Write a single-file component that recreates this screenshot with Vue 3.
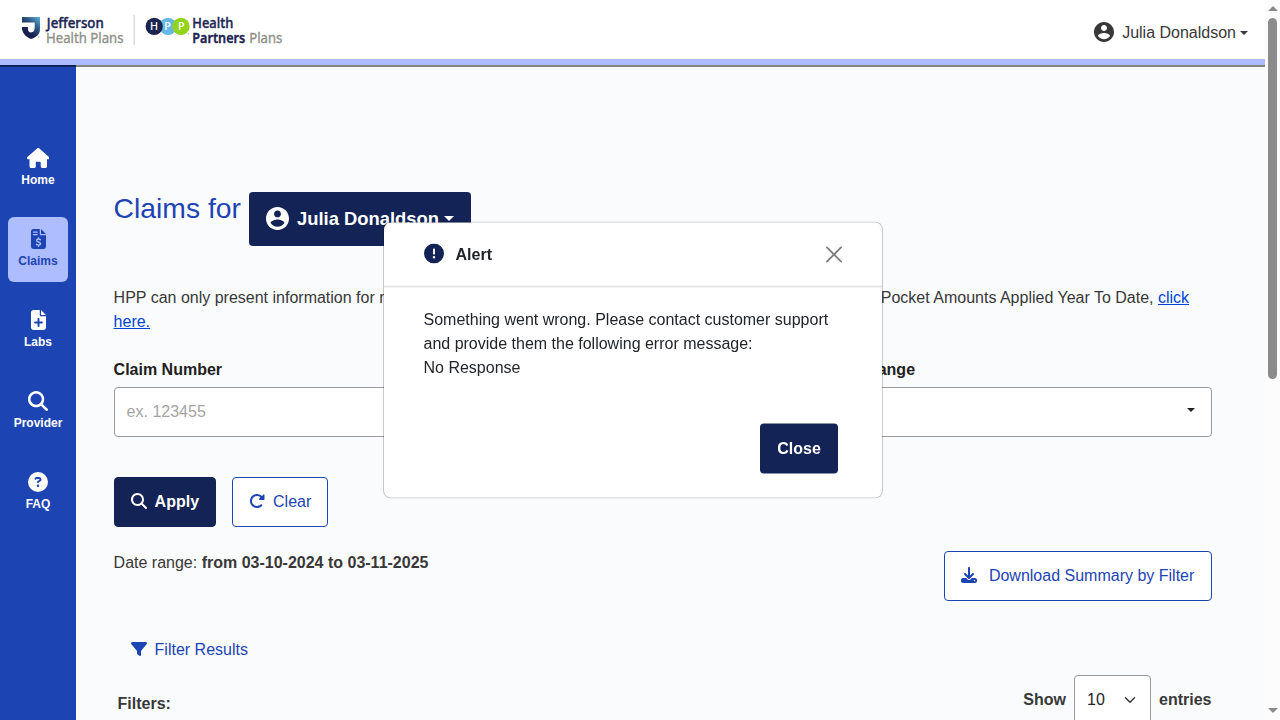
<script setup>
const file = 'M64 0C28.7 0 0 28.7 0 64V448c0 35.3 28.7 64 64 64H320c35.3 0 64-28.7 64-64V160H256c-17.7 0-32-14.3-32-32V0H64zM256 0V128H384L256 0z'
const search = 'M416 208c0 45.9-14.9 88.3-40 122.7L502.6 457.4c12.5 12.5 12.5 32.8 0 45.3s-32.8 12.5-45.3 0L330.7 376c-34.4 25.2-76.8 40-122.7 40C93.1 416 0 322.9 0 208S93.1 0 208 0S416 93.1 416 208zM208 352a144 144 0 1 0 0-288 144 144 0 1 0 0 288z'
const user = 'M12 2C6.48 2 2 6.48 2 12s4.48 10 10 10 10-4.48 10-10S17.52 2 12 2zm0 3c1.66 0 3 1.34 3 3s-1.34 3-3 3-3-1.34-3-3 1.34-3 3-3zm0 14.2c-2.5 0-4.71-1.28-6-3.22.03-1.99 4-3.08 6-3.08 1.99 0 5.97 1.09 6 3.08-1.29 1.94-3.5 3.22-6 3.22z'
const nav = [
  { label: 'Home', w: 576, path: 'M575.8 255.5c0 18-15 32.1-32 32.1h-32l.7 160.2c0 2.7-.2 5.4-.5 8.1V472c0 22.1-17.9 40-40 40H456c-1.1 0-2.2 0-3.3-.1c-1.4 .1-2.8 .1-4.2 .1H416 392c-22.1 0-40-17.9-40-40V448 384c0-17.7-14.3-32-32-32H256c-17.7 0-32 14.3-32 32v64 24c0 22.1-17.9 40-40 40H160 128.1c-1.5 0-3-.1-4.5-.2c-1.2 .1-2.4 .2-3.6 .2H104c-22.1 0-40-17.9-40-40V360c0-.9 0-1.9 .1-2.8V287.6H32c-18 0-32-14-32-32.1c0-9 3-17 10-24L266.4 8c7-7 15-8 22-8s15 2 21 7L564.8 231.5c8 7 12 15 11 24z' },
  { label: 'Claims', w: 384, path: file, active: true, lines: 'M64 80H160M64 144H160', mark: 'M240 274c-14-14-30-18-48-18-28 0-48 12-48 36 0 52 100 28 100 82 0 26-22 38-50 38-22 0-42-6-56-20M192 226V256M192 412V442' },
  { label: 'Labs', w: 384, path: file, cross: 'M192 232V408M104 320H280' },
  { label: 'Provider', w: 512, path: search },
  { label: 'FAQ', w: 512, path: 'M256 512A256 256 0 1 0 256 0a256 256 0 1 0 0 512zM169.8 165.3c7.9-22.3 29.1-37.3 52.8-37.3h58.3c34.9 0 63.1 28.3 63.1 63.1c0 22.6-12.1 43.5-31.7 54.8L280 264.4c-.2 13-10.9 23.6-24 23.6c-13.3 0-24-10.7-24-24V250.5c0-8.6 4.6-16.5 12.1-20.8l44.3-25.4c4.7-2.7 7.6-7.7 7.6-13.1c0-8.4-6.8-15.1-15.1-15.1H222.6c-3.4 0-6.4 2.1-7.5 5.3l-.4 1.2c-4.4 12.5-18.2 19-30.6 14.6s-19-18.2-14.6-30.6l.4-1.2zM224 352a32 32 0 1 1 64 0 32 32 0 1 1 -64 0z' },
]
</script>

<template>
  <div class="window">
    <div class="page">
      <header class="header">
        <svg class="logo" width="270" height="36" viewBox="0 0 270 36">
          <defs>
            <linearGradient id="shield" x1="1" y1="0" x2="0.3" y2="0.9">
              <stop offset="0" stop-color="#62b2df" />
              <stop offset="0.45" stop-color="#2d5682" />
              <stop offset="0.8" stop-color="#18204f" />
            </linearGradient>
          </defs>
          <path fill="url(#shield)" d="M2 3H20V15C20 20 17 23 11 25C6 23 3 20 2 15V13H8V15C8 17.3 9.2 18.4 11 18.4C13.3 18.4 14.7 16.8 14.7 14V8.4H2Z" />
          <circle cx="18.8" cy="23" r=".8" fill="#aaa" />
          <text x="26.8" y="13.5" textLength="57" lengthAdjust="spacingAndGlyphs" class="word navy">Jefferson</text>
          <text x="26" y="29.2" textLength="77.5" lengthAdjust="spacingAndGlyphs" class="word gray">Health Plans</text>
          <path d="M114.2 1V31" stroke="#dcdcdc" stroke-width="1.5" />
          <circle cx="148" cy="12.4" r="8.6" fill="#66b9e6" />
          <circle cx="161" cy="12.4" r="8.6" fill="#92d41d" />
          <circle cx="134.2" cy="12.4" r="8.6" fill="#1d2452" />
          <circle cx="168.3" cy="19.8" r=".8" fill="#bbb" />
          <g class="initial">
            <text x="134" y="16.3">H</text><text x="147.6" y="16.3">P</text><text x="161.2" y="16.3">P</text>
          </g>
          <text x="172.3" y="13.5" textLength="41" lengthAdjust="spacingAndGlyphs" class="word navy">Health</text>
          <text x="172.3" y="29.2" textLength="53" lengthAdjust="spacingAndGlyphs" class="word navy bold">Partners</text>
          <text x="229.3" y="29.2" textLength="33" lengthAdjust="spacingAndGlyphs" class="word gray">Plans</text>
        </svg>
        <div class="account">
          <svg width="20" height="20" viewBox="2 2 20 20"><path :d="user" /></svg>
          <span>Julia Donaldson</span><i class="caret"></i>
        </div>
      </header>

      <div class="body">
        <nav class="side">
          <a v-for="n in nav" :key="n.label" class="item" :class="{ active: n.active }">
            <svg :width="n.w * 20 / 512" height="20" :viewBox="`0 0 ${n.w} 512`">
              <path :d="n.path" />
              <path v-if="n.lines" :d="n.lines" class="cut" stroke-width="30" />
              <path v-if="n.mark" :d="n.mark" class="cut" stroke-width="36" />
              <path v-if="n.cross" :d="n.cross" class="cut" stroke-width="50" />
            </svg>
            <span>{{ n.label }}</span>
          </a>
        </nav>

        <main class="main">
          <div class="title">
            <h1>Claims for</h1>
            <button class="member">
              <svg width="23" height="23" viewBox="2 2 20 20"><path :d="user" /></svg>
              <span>Julia Donaldson</span><i class="caret"></i>
            </button>
          </div>
          <div class="note">
            <div class="note-line">
              <span>HPP can only present information for medical claims.</span>
              <span>Out-of-Pocket Amounts Applied Year To Date, <a>click</a></span>
            </div>
            <a>here.</a>
          </div>
          <div class="fields">
            <label>Claim Number<span class="control placeholder">ex. 123455</span></label>
            <label>Date Range<span class="control end"><i class="caret"></i></span></label>
          </div>
          <div class="actions">
            <button class="btn solid">
              <svg width="16" height="16" viewBox="0 0 512 512"><path :d="search" /></svg>Apply
            </button>
            <button class="btn">
              <svg width="16" height="16" viewBox="0 0 512 512"><path d="M463.5 224H472c13.3 0 24-10.7 24-24V72c0-9.7-5.8-18.5-14.8-22.2s-19.3-1.7-26.2 5.2L413.4 96.6c-87.6-86.5-228.7-86.2-315.8 1c-87.5 87.5-87.5 229.3 0 316.8s229.3 87.5 316.8 0c12.5-12.5 12.5-32.8 0-45.3s-32.8-12.5-45.3 0c-62.5 62.5-163.8 62.5-226.3 0s-62.5-163.8 0-226.3c62.2-62.2 162.7-62.5 225.3-1L327 183c-6.9 6.9-8.9 17.2-5.2 26.2s12.5 14.8 22.2 14.8H463.5z" /></svg>Clear
            </button>
          </div>
          <div class="summary">
            <p>Date range: <b>from 03-10-2024 to 03-11-2025</b></p>
            <button class="btn download">
              <svg width="16" height="16" viewBox="0 0 512 512"><path d="M288 32c0-17.7-14.3-32-32-32s-32 14.3-32 32V274.7l-73.4-73.4c-12.5-12.5-32.8-12.5-45.3 0s-12.5 32.8 0 45.3l128 128c12.5 12.5 32.8 12.5 45.3 0l128-128c12.5-12.5 12.5-32.8 0-45.3s-32.8-12.5-45.3 0L288 274.7V32zM64 352c-35.3 0-64 28.7-64 64v32c0 35.3 28.7 64 64 64H448c35.3 0 64-28.7 64-64V416c0-35.3-28.7-64-64-64H346.5l-45.3 45.3c-25 25-65.5 25-90.5 0L165.5 352H64zm368 56a24 24 0 1 1 0 48 24 24 0 1 1 0-48z" /></svg>Download Summary by Filter
            </button>
          </div>
          <div class="filter">
            <svg width="16" height="16" viewBox="0 0 512 512"><path d="M3.9 54.9C10.5 40.9 24.5 32 40 32H472c15.5 0 29.5 8.9 36.1 22.9s4.6 30.5-5.2 42.5L320 320.9V448c0 12.1-6.8 23.2-17.7 28.6s-23.8 4.3-33.5-3l-64-48c-8.1-6-12.8-15.5-12.8-25.6V320.9L9 97.3C-.7 85.4-2.8 68.8 3.9 54.9z" /></svg>
            Filter Results
          </div>
          <div class="table-head">
            <b class="filters">Filters:</b>
            <div class="entries">
              <b>Show</b>
              <span class="select">10
                <svg width="12" height="12" viewBox="0 0 16 16"><path d="m2 5 6 6 6-6" fill="none" stroke="#343a40" stroke-width="2" stroke-linecap="round" stroke-linejoin="round" /></svg>
              </span>
              <b>entries</b>
            </div>
          </div>
        </main>
      </div>
    </div>

    <div class="scrollbar">
      <i class="up"></i><i class="thumb"></i><i class="down"></i>
    </div>

    <section class="modal">
      <div class="modal-head">
        <svg width="20" height="20" viewBox="0 0 512 512"><path d="M256 512A256 256 0 1 0 256 0a256 256 0 1 0 0 512zm0-384c13.3 0 24 10.7 24 24V264c0 13.3-10.7 24-24 24s-24-10.7-24-24V152c0-13.3 10.7-24 24-24zM224 352a32 32 0 1 1 64 0 32 32 0 1 1 -64 0z" /></svg>
        <b>Alert</b>
        <svg class="x" width="16" height="16" viewBox="0 0 16 16"><path d="M.7.7 15.3 15.3M15.3.7.7 15.3" stroke="#7f7f7f" stroke-width="1.9" stroke-linecap="round" /></svg>
      </div>
      <p>Something went wrong. Please contact customer support<br>and provide them the following error message:<br>No Response</p>
      <button class="close">Close</button>
    </section>
  </div>
</template>

<style>
html, body { overflow: hidden; }
</style>

<style scoped>
* { box-sizing: border-box; }
.window { position: relative; display: flex; width: 1280px; height: 720px; overflow: hidden; font: 16px/24px "Liberation Sans", Arial, sans-serif; color: #383838; background: #fafbfd; }
svg { display: block; flex: none; fill: currentColor; }
button { font-family: inherit; margin: 0; }
p, h1 { margin: 0; }
.page { width: 1265px; height: 720px; display: flex; flex-direction: column; overflow: hidden; }
.header { height: 65px; flex: none; display: flex; justify-content: space-between; align-items: flex-start; background: #fff; border-bottom: 6px solid #adbdff; padding: 14px 17px 0 20px; box-shadow: 0 2px 0 rgba(0,0,0,.47); position: relative; }
.logo { overflow: visible; }
.word { font-family: "Noto Sans", sans-serif; font-size: 14.8px; }
.navy { fill: #1d2452; font-weight: 500; stroke: #1d2452; stroke-width: .4px; }
.bold { font-weight: 600; }
.gray { fill: #8e8f86; font-weight: 400; stroke: #8e8f86; stroke-width: .35px; }
.initial { font: 500 10.8px "Noto Sans", sans-serif; fill: #fff; text-anchor: middle; }
.account { display: flex; align-items: center; margin-top: 6px; }
.account svg { margin-top: -1px; }
.account span { margin-left: 8px; padding-top: 1px; }
.caret { display: inline-block; border: 4.8px solid transparent; border-top-color: currentColor; border-bottom: 0; margin-left: 4px; }
.body { flex: 1; display: flex; min-height: 0; }
.side { width: 76px; flex: none; background: #1d44b3; padding: 71px 8px 0; display: flex; flex-direction: column; gap: 16px; }
.item { height: 65px; border-radius: 6px; display: flex; flex-direction: column; align-items: center; padding-top: 12px; color: #fff; font-weight: 700; font-size: 12px; line-height: 18px; gap: 3px; }
.active { background: #adbdff; color: #1d44b3; }
.cut { fill: none; stroke: #1d44b3; stroke-linecap: round; }
.active .cut { stroke: #adbdff; }
.main { width: 1136px; padding: 127px 0 0 37.6px; }
.title { display: flex; height: 54px; }
h1 { font-size: 28.3px; line-height: 32px; font-weight: 400; color: #1d44b3; width: 135.4px; white-space: nowrap; }
.member { width: 222px; height: 54px; border: 0; border-radius: 4px; background: #142355; color: #fff; font-weight: 700; font-size: 18.4px; display: flex; align-items: center; padding: 0 17px; }
.member svg { margin-top: -1px; }
.member span { margin-left: 8px; white-space: nowrap; }
.member .caret { border-width: 5.5px 5.5px 0; margin: -2px 0 0 5px; }
.note { margin-top: 40px; }
.note-line { display: flex; justify-content: space-between; width: 1075.5px; white-space: nowrap; }
.note a { color: #0044d6; text-decoration: underline; }
.fields { display: grid; grid-template-columns: 1fr 385px; gap: 24px; margin-top: 24px; }
.fields label { display: block; font-weight: 700; color: #212121; }
.control { display: flex; align-items: center; height: 50px; margin-top: 5px; background: #fff; border: 1px solid #9b9b9b; border-radius: 4px; padding: 0 12px; font-weight: 400; }
.placeholder { color: #a5a5a5; }
.end { justify-content: flex-end; padding: 0 16px 5px; }
.actions { display: flex; gap: 16px; margin-top: 40px; }
.btn { height: 50px; border: 1px solid #1d44b3; border-radius: 4px; background: #fff; color: #1d44b3; font-size: 16px; line-height: 24px; padding: 0 16px; display: flex; align-items: center; gap: 8px; white-space: nowrap; }
.btn svg { margin-top: -2px; }
.solid { background: #142355; border-color: #142355; color: #fff; font-weight: 700; }
.download { gap: 12px; padding-right: 16.7px; }
.summary { display: flex; justify-content: space-between; margin-top: 24px; }
.filter { display: flex; align-items: center; gap: 8px; color: #1d44b3; margin: 37px 0 0 17px; }
.filter svg { margin-top: -2px; }
.table-head { display: flex; justify-content: space-between; align-items: flex-start; margin-top: 13px; }
.filters { margin: 17px 0 0 4px; }
.entries { display: flex; align-items: center; gap: 8px; padding-right: .5px; }
.select { width: 77px; height: 50px; border: 1px solid #9b9b9b; border-radius: 4px; background: #fff; display: flex; align-items: center; justify-content: space-between; padding: 0 14px 0 12px; color: #212529; }
.scrollbar { width: 15px; height: 720px; background: #fcfcfc; display: flex; flex-direction: column; align-items: center; padding: 6px 0 7px 0; }
.up, .down { border: 5px solid transparent; }
.up { border-top: 0; border-bottom: 5px solid #8b8b8b; }
.down { margin-top: auto; border-bottom: 0; border-top: 5px solid #8b8b8b; }
.thumb { width: 9px; height: 361px; margin-top: 7px; border-radius: 5px; background: #8b8b8b; }
.modal { position: absolute; left: 50%; margin-left: -7px; top: 50%; transform: translate(-50%, -50%); will-change: transform; width: 500px; height: 277px; background: #fff; border: 1px solid rgba(0,0,0,.2); background-clip: padding-box; border-radius: 8px; color: #212529; display: flex; flex-direction: column; }
.modal-head { height: 65px; flex: none; border-bottom: 2px solid #e6e6e6; display: flex; align-items: center; padding: 0 40px 0 39.5px; }
.modal-head svg:first-child { color: #142355; margin-top: -2px; }
.modal-head b { margin-left: 12px; }
.modal-head .x { margin-left: auto; }
.modal p { padding: 20px 39.5px 0; white-space: nowrap; }
.close { margin: 44px 44px 0 auto; width: 78px; height: 50px; border: 0; border-radius: 4px; background: #142355; color: #fff; font-weight: 700; font-size: 16px; }
</style>
